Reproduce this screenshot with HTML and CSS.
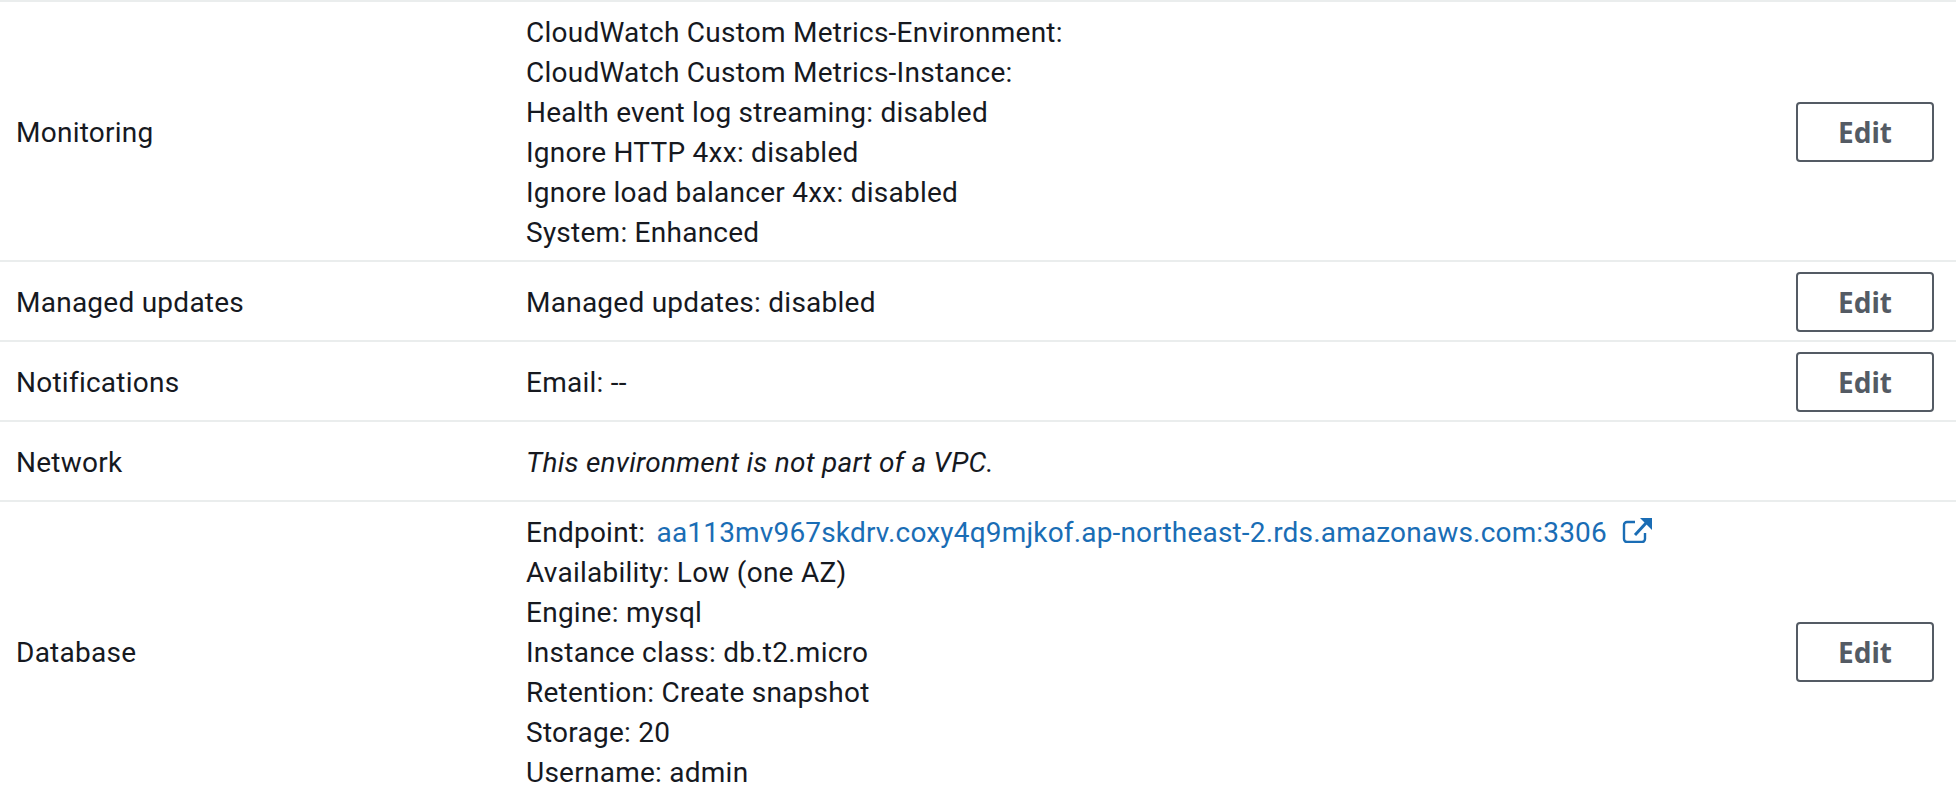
FILE: index.html
```html
<!DOCTYPE html>
<html>
<head>
<meta charset="UTF-8">
<title>Configuration</title>
<link rel="stylesheet" href="styles.css">
</head>

<body>

<div class="config">

  <div class="row">
    <div class="label">Monitoring</div>
    <div class="value">
      <div>CloudWatch Custom Metrics-Environment:</div>
      <div>CloudWatch Custom Metrics-Instance:</div>
      <div>Health event log streaming: disabled</div>
      <div>Ignore HTTP 4xx: disabled</div>
      <div>Ignore load balancer 4xx: disabled</div>
      <div>System: Enhanced</div>
    </div>
    <div class="action"><button class="editbtn">Edit</button></div>
  </div>

  <div class="row">
    <div class="label">Managed updates</div>
    <div class="value">
      <div>Managed updates: disabled</div>
    </div>
    <div class="action"><button class="editbtn">Edit</button></div>
  </div>

  <div class="row">
    <div class="label">Notifications</div>
    <div class="value">
      <div>Email: --</div>
    </div>
    <div class="action"><button class="editbtn">Edit</button></div>
  </div>

  <div class="row">
    <div class="label">Network</div>
    <div class="value">
      <div class="note">This environment is not part of a VPC.</div>
    </div>
    <div class="action"></div>
  </div>

  <div class="row">
    <div class="label">Database</div>
    <div class="value">
      <div>Endpoint: <a class="extlink" href="#">aa113mv967skdrv.coxy4q9mjkof.ap-northeast-2.rds.amazonaws.com:3306<svg class="exticon" viewBox="0 0 30 26" width="30" height="26"><path d="M13 5H5A3 3 0 0 0 2 8V22A3 3 0 0 0 5 25H20A3 3 0 0 0 23 22V16" fill="none" stroke="currentColor" stroke-width="2.400"/><path d="M13 18L25 5" fill="none" stroke="currentColor" stroke-width="3"/><path d="M18 1H30V13Z" fill="currentColor"/></svg></a></div>
      <div>Availability: Low (one AZ)</div>
      <div>Engine: mysql</div>
      <div>Instance class: db.t2.micro</div>
      <div>Retention: Create snapshot</div>
      <div>Storage: 20</div>
      <div>Username: admin</div>
    </div>
    <div class="action"><button class="editbtn">Edit</button></div>
  </div>

</div>

</body>
</html>
```

FILE: styles.css
```css
html,body{
  margin:0; height:792px; overflow:hidden;
  background:#fff;
}
body{
  font-family:Roboto,Arial,sans-serif;
  font-size:28px; line-height:40px; color:#16191f;
  letter-spacing:.25px;
}
.row{
  display:flex; align-items:center;
  border-top:2px solid #eaeded;
  padding:10px 22px 8px 16px;
  min-height:60px;
}
.label{width:510px;flex:none;padding-top:1px;margin-bottom:-1px}
.value{flex:1;padding-top:1px;margin-bottom:-1px}
.action{width:138px;flex:none}
.note{font-style:italic}
.extlink{color:#1a6db5;text-decoration:none;margin-left:4px;letter-spacing:.17px}
.exticon{vertical-align:-1px;margin-left:15px}
.editbtn{
  display:block; width:138px; height:60px; padding:0;
  background:#fff; border:2px solid #545b64; border-radius:4px;
  font-family:"Noto Sans",Arial,sans-serif;
  font-size:28px; font-weight:700; color:#545b64;
  letter-spacing:0;
}
```
